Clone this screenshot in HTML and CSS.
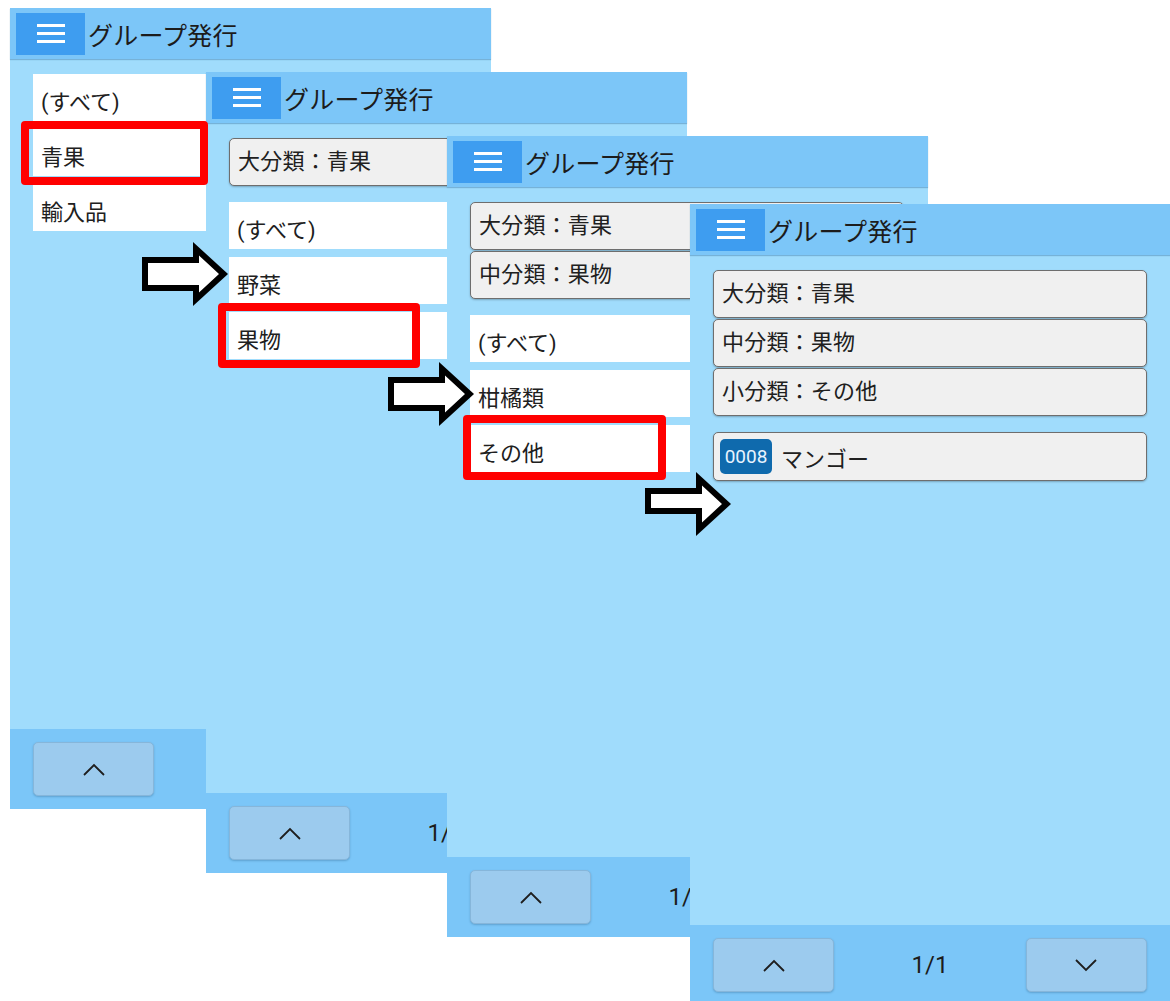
FILE: index.html
```html
<!DOCTYPE html>
<html lang="ja">
<head>
<meta charset="utf-8">
<title>グループ発行</title>
<link rel="stylesheet" href="styles.css">
</head>
<body>
<div class="canvas">

  <section class="screen s1">
    <header class="bar">
      <div class="menu-btn"><span></span><span></span><span></span></div>
      <h1 class="title">グループ発行</h1>
    </header>
    <main class="content">
      <ul class="list">
        <li class="item">(すべて)</li>
        <li class="item">青果</li>
        <li class="item">輸入品</li>
      </ul>
    </main>
    <footer class="foot">
      <button class="nav-btn"><svg width="22" height="13" viewBox="0 0 22 13"><polyline points="1,12 11,2 21,12"/></svg></button>
      <span class="count">1/1</span>
      <span class="nav-spacer"></span>
    </footer>
    <div class="mark m1"></div>
  </section>

  <section class="screen s2">
    <header class="bar">
      <div class="menu-btn"><span></span><span></span><span></span></div>
      <h1 class="title">グループ発行</h1>
    </header>
    <main class="content">
      <div class="crumbs">
        <div class="crumb">大分類：青果</div>
      </div>
      <ul class="list">
        <li class="item">(すべて)</li>
        <li class="item">野菜</li>
        <li class="item">果物</li>
      </ul>
    </main>
    <footer class="foot">
      <button class="nav-btn"><svg width="22" height="13" viewBox="0 0 22 13"><polyline points="1,12 11,2 21,12"/></svg></button>
      <span class="count">1/1</span>
      <span class="nav-spacer"></span>
    </footer>
    <div class="mark m2"></div>
  </section>

  <section class="screen s3">
    <header class="bar">
      <div class="menu-btn"><span></span><span></span><span></span></div>
      <h1 class="title">グループ発行</h1>
    </header>
    <main class="content">
      <div class="crumbs">
        <div class="crumb">大分類：青果</div>
        <div class="crumb">中分類：果物</div>
      </div>
      <ul class="list">
        <li class="item">(すべて)</li>
        <li class="item">柑橘類</li>
        <li class="item">その他</li>
      </ul>
    </main>
    <footer class="foot">
      <button class="nav-btn"><svg width="22" height="13" viewBox="0 0 22 13"><polyline points="1,12 11,2 21,12"/></svg></button>
      <span class="count">1/1</span>
      <span class="nav-spacer"></span>
    </footer>
    <div class="mark m3"></div>
  </section>

  <section class="screen s4">
    <header class="bar">
      <div class="menu-btn"><span></span><span></span><span></span></div>
      <h1 class="title">グループ発行</h1>
    </header>
    <main class="content">
      <div class="crumbs">
        <div class="crumb">大分類：青果</div>
        <div class="crumb">中分類：果物</div>
        <div class="crumb">小分類：その他</div>
      </div>
      <ul class="list">
        <li class="product"><span class="code">0008</span><span class="pname">マンゴー</span></li>
      </ul>
    </main>
    <footer class="foot">
      <button class="nav-btn"><svg width="22" height="13" viewBox="0 0 22 13"><polyline points="1,12 11,2 21,12"/></svg></button>
      <span class="count">1/1</span>
      <button class="nav-btn"><svg width="22" height="13" viewBox="0 0 22 13"><polyline points="1,1 11,11 21,1"/></svg></button>
    </footer>
  </section>

  <svg class="arrow a1" width="86" height="64" viewBox="0 0 86 64"><polygon class="arrow-out" points="0,15 51,15 51,0 86,32 51,64 51,49 0,49"/><polygon class="arrow-in" points="6,21 57,21 57,13.6 77,32 57,50.4 57,43 6,43"/></svg>
  <svg class="arrow a2" width="86" height="64" viewBox="0 0 86 64"><polygon class="arrow-out" points="0,15 51,15 51,0 86,32 51,64 51,49 0,49"/><polygon class="arrow-in" points="6,21 57,21 57,13.6 77,32 57,50.4 57,43 6,43"/></svg>
  <svg class="arrow a3" width="86" height="64" viewBox="0 0 86 64"><polygon class="arrow-out" points="0,16 51,16 51,0 86,32 51,64 51,42 0,42"/><polygon class="arrow-in" points="6,22 57,22 57,13.6 77,32 57,50.4 57,36 6,36"/></svg>

</div>
</body>
</html>
```

FILE: styles.css
```css
* { box-sizing: border-box; }

html, body {
  margin: 0;
  padding: 0;
  background: #ffffff;
}

body {
  width: 1170px;
  height: 1001px;
  overflow: hidden;
  font-family: Roboto, "Noto Sans CJK JP", "Noto Sans", sans-serif;
  color: #202020;
}

.canvas {
  position: relative;
  width: 1170px;
  height: 1001px;
  overflow: hidden;
}

.screen {
  position: absolute;
  width: 481px;
  height: 801px;
  display: flex;
  flex-direction: column;
  background: #a0dcfc;
}

.s1 { left: 10px; top: 8px; }
.s2 { left: 206px; top: 72px; }
.s3 { left: 447px; top: 136px; }
.s4 { left: 690px; top: 204px; }

.bar {
  height: 51px;
  flex: none;
  display: flex;
  align-items: center;
  padding-left: 6px;
  background: #7cc6f8;
  box-shadow: 0 1px 1px rgba(40, 100, 150, 0.35);
  position: relative;
}

.menu-btn {
  width: 69px;
  height: 42px;
  background: #3e9df0;
  display: flex;
  flex-direction: column;
  align-items: center;
  justify-content: center;
  gap: 5px;
}

.menu-btn span {
  display: block;
  width: 28px;
  height: 3px;
  background: #ffffff;
}

.title {
  margin: 0 0 0 3px;
  font-size: 25px;
  font-weight: 400;
  color: #1c1c1c;
  letter-spacing: 0.2px;
}

.content {
  flex: 1;
  padding: 15px 24px 0 23px;
  display: flex;
  flex-direction: column;
  gap: 16px;
}

.crumbs {
  display: flex;
  flex-direction: column;
  gap: 1px;
}

.crumb {
  height: 48px;
  display: flex;
  align-items: center;
  padding: 0 0 7px 8px;
  background: #f0f0f0;
  border: 1.5px solid #6e6e6e;
  border-radius: 5px;
  box-shadow: 0 1px 2px rgba(0, 0, 0, 0.25);
  font-size: 22px;
  letter-spacing: 0.2px;
}

.list {
  list-style: none;
  margin: 0;
  padding: 0;
  display: flex;
  flex-direction: column;
  gap: 8px;
}

.item {
  height: 47px;
  display: flex;
  align-items: center;
  padding: 5px 0 0 8px;
  background: #ffffff;
  font-size: 22px;
}

.product {
  height: 49px;
  display: flex;
  align-items: center;
  gap: 9px;
  padding-left: 6px;
  background: #f0f0f0;
  border: 1.5px solid #6e6e6e;
  border-radius: 5px;
  box-shadow: 0 1px 2px rgba(0, 0, 0, 0.25);
}

.code {
  width: 52px;
  height: 35px;
  display: flex;
  align-items: center;
  justify-content: center;
  background: #0f6aad;
  color: #e8f4ff;
  border-radius: 5px;
  font-size: 19px;
}

.pname {
  font-size: 22px;
}

.foot {
  height: 80px;
  flex: none;
  display: flex;
  align-items: center;
  justify-content: space-between;
  padding: 0 24px 0 23px;
  background: #7bc6f8;
}

.nav-btn {
  width: 121px;
  height: 54px;
  margin: 0;
  padding: 0;
  display: flex;
  align-items: center;
  justify-content: center;
  background: #9ccbee;
  border: 1px solid #86b6da;
  border-radius: 5px;
  box-shadow: 0 1px 2px rgba(30, 80, 120, 0.3);
}

.nav-btn polyline {
  fill: none;
  stroke: #1e1e1e;
  stroke-width: 1.8;
}

.nav-spacer {
  width: 121px;
}

.count {
  font-size: 24px;
  color: #1c1c1c;
}

.mark {
  position: absolute;
  z-index: 2;
  border: 8px solid #ff0000;
  border-radius: 4px;
}

.m1 { left: 11px; top: 113px; width: 187px; height: 64px; }
.m2 { left: 12px; top: 231px; width: 202px; height: 65px; }
.m3 { left: 16px; top: 279px; width: 203px; height: 65px; }

.arrow {
  position: absolute;
  z-index: 3;
}

.arrow-out { fill: #000000; }
.arrow-in { fill: #ffffff; }

.a1 { left: 142px; top: 242px; }
.a2 { left: 388px; top: 362px; }
.a3 { left: 645px; top: 472px; }
```
